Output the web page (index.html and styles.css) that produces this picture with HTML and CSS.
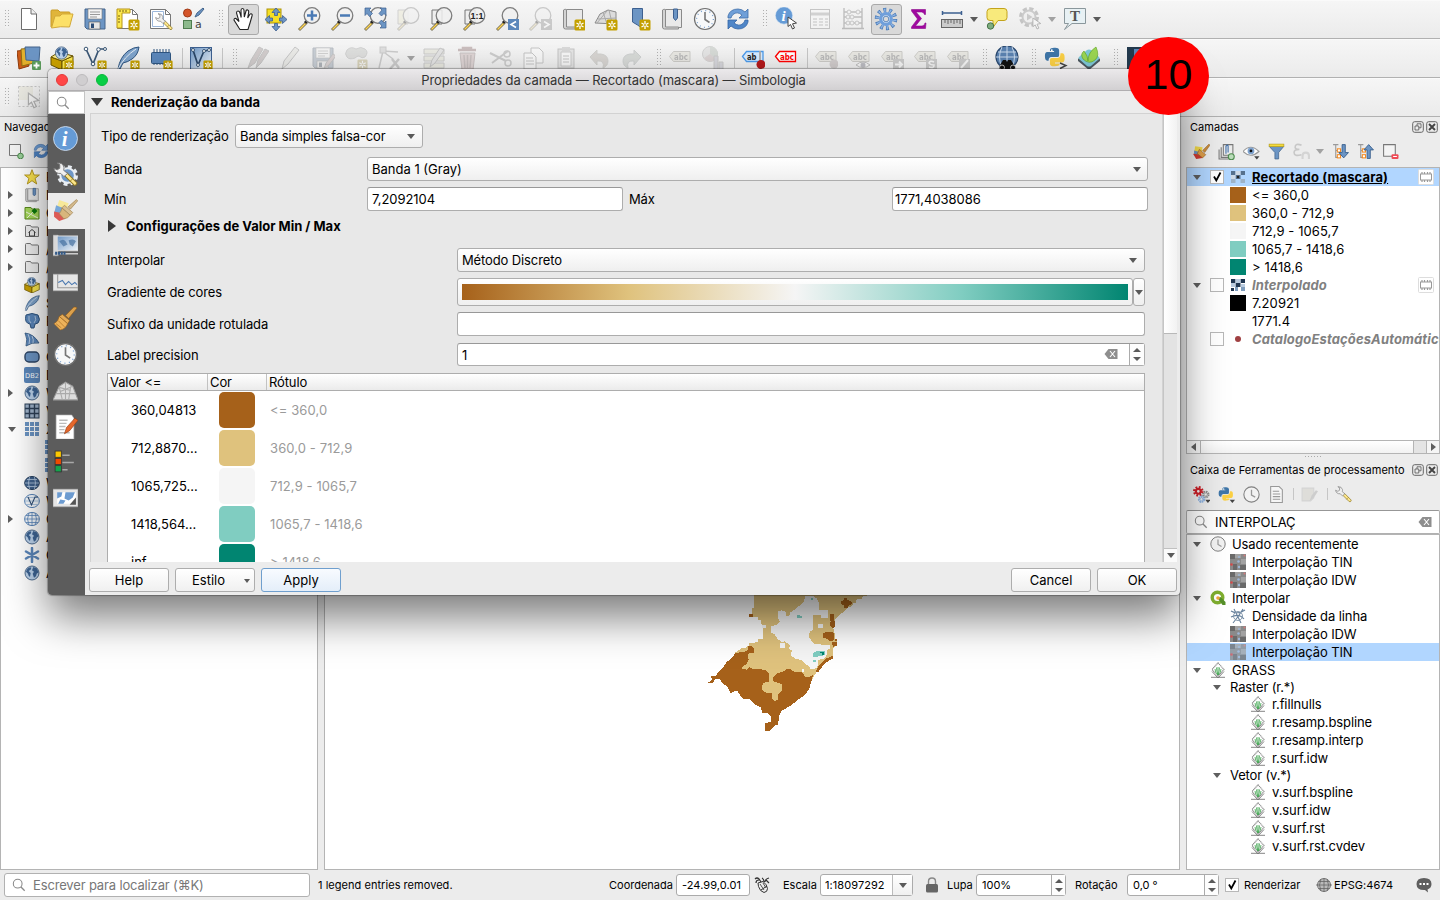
FILE: index.html
```html
<!DOCTYPE html>
<html lang="pt">
<head>
<meta charset="utf-8">
<title>QGIS</title>
<link rel="stylesheet" href="styles.css">
</head>
<body>
<svg class="defs" xmlns="http://www.w3.org/2000/svg">
<defs>
<linearGradient id="blu" x1="0" y1="0" x2="1" y2="1"><stop offset="0" stop-color="#8fb4dc"/><stop offset="1" stop-color="#3465a4"/></linearGradient>
<linearGradient id="pale" x1="0" y1="0" x2="1" y2="1"><stop offset="0" stop-color="#6b95c4"/><stop offset="1" stop-color="#f2f6fa"/></linearGradient>
<symbol id="star" viewBox="0 0 12 12"><rect x=".5" y=".5" width="11" height="11" rx="1.500" fill="#c4a000"/><path d="M6 2v8M2.500 4l7 4M2.500 8l7-4" stroke="#fff" stroke-width="1.300"/><circle cx="6" cy="6" r="1" fill="#c4a000"/></symbol>
<symbol id="new" viewBox="0 0 24 24"><path d="M4.500 1.500H14l5.500 5.500V22.500H4.500z" fill="#fff" stroke="#6d6d6d"/><path d="M14 1.500V7h5.500" fill="#eee" stroke="#6d6d6d"/></symbol>
<symbol id="open" viewBox="0 0 24 24"><path d="M1 20V4q0-1 1-1h6l2 2h9q1 0 1 1v3" fill="#e0b53a" stroke="#c99b25"/><path d="M1.500 21 5 9h5l2-2h11l-3.500 13q-9-1-18 1z" fill="#fce068" stroke="#d3a938"/></symbol>
<symbol id="save" viewBox="0 0 24 24"><path d="M2 2h20v20H4l-2-2z" fill="#6c95c4" stroke="#44658c"/><rect x="5" y="2" width="14" height="10" fill="#f4f4f4" stroke="#777" stroke-width=".6"/><path d="M7 5h10M7 7.500h10M7 10h7" stroke="#999"/><rect x="6" y="15" width="11" height="7" fill="#e6e6e6" stroke="#555" stroke-width=".6"/><rect x="8" y="16.500" width="3" height="4.500" fill="#2d4d77"/></symbol>
<symbol id="layout" viewBox="0 0 24 24"><path d="M1.500 2.500h15l5 5v14h-20z" fill="#fff" stroke="#777"/><path d="M16.500 2.500v5h5" fill="none" stroke="#777"/><path d="M1 2h13v4H6v15H1z" fill="#fce94f" stroke="#b89518"/><path d="M4 3v2M7 3v2M10 3v2M2 9h2M2 12h2M2 15h2" stroke="#755f13"/><use href="#star" x="12" y="12" width="12" height="12"/></symbol>
<symbol id="wrench" viewBox="0 0 24 24"><path d="M13 13 20 21q2 1 2.500-1L15 11z" fill="#fce68a" stroke="#a78a25"/><path d="m14 13-5-2q-3 0-4-2.500l3 .500 1.500-2L8 4.500q4 0 4 3.500l3.500 3.500z" fill="#e5e5e5" stroke="#666"/></symbol>
<symbol id="wrench2" viewBox="0 0 24 24"><path d="m11 13 9 9q2.500 1 3-2l-9.500-9.500z" fill="#fce68a" stroke="#8f7722"/><path d="m16 19 3-3" stroke="#8f7722" stroke-width=".8"/><path d="m10.500 14-3-3Q2 11.500.8 6L4 7.500 6.500 6 6.500 2.500 4 1q5.500-.500 6.500 4 .2 2-.3 3l3.800 3z" fill="#f0f0f0" stroke="#777" stroke-width=".9"/></symbol>
<symbol id="manage" viewBox="0 0 24 24"><path d="M1.500 2.500h15l5 5v14h-20z" fill="#fff" stroke="#777"/><path d="M3.500 4.500h11v15h-11z" fill="#fff" stroke="#9cb7da"/><path d="M16.500 2.500v5h5" fill="none" stroke="#777"/><use href="#wrench2" x="6" y="6" width="18" height="18"/></symbol>
<symbol id="style" viewBox="0 0 24 24"><circle cx="5.500" cy="6" r="4" fill="#d4552a" stroke="#a03b18"/><rect x="1.500" y="13.500" width="8" height="8" fill="#8cb98c" stroke="#4f7d4f"/><path d="m13 10 2-4 6-5 1 1-5 6z" fill="#6c95c4" stroke="#44658c"/><text x="13" y="21" font-size="11" font-family="DejaVu Sans" font-weight="400" fill="#444">a</text></symbol>
<symbol id="hand" viewBox="0 0 24 24"><path d="M8 21 3 13q0-2 2-1.500l3 3L5.500 6q0-2 1.500-2t2 2l1.200 4.500L10 3.500q0-2 1.500-2T13 3.500l.3 6.500L15 4q.5-1.500 1.700-1t1 2L16.700 11l2-3.500q1-1.200 2-.5t.3 2L19 16l-2 6.500H9z" fill="#fff" stroke="#222" stroke-width="1.100"/></symbol>
<symbol id="pansel" viewBox="0 0 24 24"><rect x="3" y="2" width="14" height="14" fill="#f5df23" stroke="#ad9407"/><path d="M12 1l4 4.500h-2.500v3h-3v-3H8zM12 24l4-4.500h-2.500v-3h-3v3H8zM1 12.500l4.500-4V11h3v3h-3v2.500zM23 12.500l-4.500-4V11h-3v3h3v2.500z" fill="#6c95c4" stroke="#3d6090" stroke-width=".8"/></symbol>
<symbol id="lens" viewBox="0 0 24 24"><path d="m1.500 22 7-7 1.500 1.500-7 7z" fill="#fcd34f" stroke="#333" stroke-width=".7"/><path d="m8 16 2-2" stroke="#222" stroke-width="2.800"/><circle cx="15" cy="8.500" r="7.800" fill="#f0f0f0" fill-opacity=".85" stroke="#7d7d7d" stroke-width="1.300"/></symbol>
<symbol id="zin" viewBox="0 0 24 24"><use href="#lens"/><path d="M15 3.500v10M10 8.500h10" stroke="#4a7ab5" stroke-width="2.500"/></symbol>
<symbol id="zout" viewBox="0 0 24 24"><use href="#lens"/><path d="M10 8.500h10" stroke="#4a7ab5" stroke-width="2.500"/></symbol>
<symbol id="zfull" viewBox="0 0 24 24"><use href="#lens"/><path d="M2 1h6L6 3l3.500 3.500-3 3L4 6.500 2 8.500zM23 1h-6l2 2-3 3.500 2.500 2.500L21 6.500l2 2zM23 21h-6l2-2-3-3.500 2.500-2.500 2.500 3 2-2z" fill="#6c95c4" stroke="#3d6090" stroke-width=".7"/></symbol>
<symbol id="zsel" viewBox="0 0 24 24"><path d="M2 3h10v14H2z" fill="#f0e8a0" stroke="#999"/><use href="#lens"/></symbol>
<symbol id="zlay" viewBox="0 0 24 24"><path d="M3 3h10v14H3z" fill="#eee" stroke="#777"/><use href="#lens"/></symbol>
<symbol id="z11" viewBox="0 0 24 24"><use href="#zlay"/><text x="8.500" y="12" font-size="9" font-weight="700" font-family="Liberation Sans" fill="#222">1:1</text></symbol>
<symbol id="zprev" viewBox="0 0 24 24"><use href="#lens"/><rect x="13" y="12" width="11" height="11" fill="#5b87bb"/><path d="m21 14.500-5 3 5 3" fill="none" stroke="#fff" stroke-width="1.600"/></symbol>
<symbol id="znext" viewBox="0 0 24 24"><use href="#lens"/><rect x="13" y="12" width="11" height="11" fill="#888"/><path d="m16 14.500 5 3-5 3" fill="none" stroke="#fff" stroke-width="1.600"/></symbol>
<symbol id="book" viewBox="0 0 24 24"><path d="M5.500 2.500h16v18h-16z" fill="#e9e9e9" stroke="#8a8a8a"/><path d="M2.500 3q3-2 3 1v16h13v2h-14q-2 0-2-2z" fill="#d3d3d3" stroke="#8a8a8a"/></symbol>
<symbol id="newmap" viewBox="0 0 24 24"><use href="#book"/><use href="#star" x="13" y="12" width="12" height="12"/></symbol>
<symbol id="new3d" viewBox="0 0 24 24"><path d="M1 16 6 7l8-4 8 2v12z" fill="#dcdcdc" stroke="#8a8a8a"/><path d="m4 12 18-1M9 5l4 12M15 3l3 13M3 16 13 4" stroke="#aaa" fill="none"/><use href="#star" x="12" y="12" width="12" height="12"/></symbol>
<symbol id="newbm" viewBox="0 0 24 24"><path d="M5.500 1.500h10v20l-5-3.500-5-3z" fill="#6c95c4" stroke="#3d6090"/><use href="#star" x="12" y="12" width="12" height="12"/></symbol>
<symbol id="bm" viewBox="0 0 24 24"><use href="#book"/><path d="M13.500 2v9l2 2.500 2-2.500V2z" fill="#6c95c4" stroke="#3d6090"/></symbol>
<symbol id="clock" viewBox="0 0 24 24"><circle cx="12" cy="12" r="10.500" fill="#f7f8f9" stroke="#707070" stroke-width="1.200"/><circle cx="12" cy="12" r="8.400" fill="none" stroke="#7aa0cf" stroke-width="1.300" stroke-dasharray="1 3.400"/><path d="M12 5v7.500l4.500 3" fill="none" stroke="#777" stroke-width="1.600"/></symbol>
<symbol id="refresh" viewBox="0 0 24 24"><path d="M2 11V9q2-7 10-7 4 0 7 3l3-3v9h-9l3-3q-5-4-9-.500-1.500 1.500-2 3.500z" fill="#6f9fd8" stroke="#3d6da8" stroke-width=".8"/><path d="M22 13v2q-2 7-10 7-4 0-7-3l-3 3v-9h9l-3 3q5 4 9 .500 1.500-1.500 2-3.500z" fill="#4f86c8" stroke="#3465a4" stroke-width=".8"/></symbol>
<symbol id="info" viewBox="0 0 24 24"><circle cx="12" cy="12" r="11.500" fill="#659bd6" stroke="#d8e5f4" stroke-width=".8"/><text x="8.500" y="19" font-family="Liberation Serif" font-style="italic" font-weight="700" font-size="20" fill="#fff">i</text></symbol>
<symbol id="cursor" viewBox="0 0 12 14"><path d="M1 1v9.500l2.500-2 2 4.500 2-1-2-4.200L9.500 7z" fill="#fff" stroke="#444"/></symbol>
<symbol id="identify" viewBox="0 0 24 24"><use href="#info" x="0" y="-1" width="18" height="19"/><use href="#cursor" x="12" y="9" width="12" height="14"/></symbol>
<symbol id="table" viewBox="0 0 24 24"><rect x="2.500" y="2.500" width="19" height="19" fill="#fafafa" stroke="#777"/><path d="M3 7h18" stroke="#999" stroke-width="3"/><path d="M5 12h4M11 12h4M17 12h3M5 15h4M11 15h4M17 15h3M5 18h4M11 18h4M17 18h3" stroke="#777"/></symbol>
<symbol id="abacus" viewBox="0 0 24 24"><path d="M3 1v20M21 1v20M1 21.500h22M3 5h18M3 10h18M3 16h18" stroke="#666" stroke-width="1.400"/><g fill="#eee" stroke="#777"><circle cx="8" cy="5" r="2"/><circle cx="17" cy="5" r="2"/><circle cx="7" cy="10" r="2"/><circle cx="11" cy="10" r="2"/><circle cx="7" cy="16" r="2"/><circle cx="11" cy="16" r="2"/><circle cx="16" cy="16" r="2"/></g></symbol>
<symbol id="gear" viewBox="0 0 24 24"><circle cx="12" cy="12" r="9" fill="none" stroke="#4376b5" stroke-width="4.500" stroke-dasharray="2.800 2.855"/><circle cx="12" cy="12" r="8.300" fill="none" stroke="#8db4e4" stroke-width="4.600" stroke-dasharray="1.400 3.815" stroke-dashoffset="-.55"/><circle cx="12" cy="12" r="5.300" fill="#dce8f5" stroke="#6f9fdb" stroke-width="3.200"/><circle cx="12" cy="12" r="2.800" fill="#dadada" stroke="#4376b5" stroke-width=".8"/></symbol>
<symbol id="sigma" viewBox="0 0 24 24"><path d="M4.500 2.500h14v5h-1q-.5-2.500-3-2.500H9l5.500 6.500L8.500 19H15q2.500 0 3-3h1l-.5 5.500h-14V20l6-8-6-8z" fill="#a008a0" stroke="#8b0a8b" stroke-width=".6"/></symbol>
<symbol id="ruler" viewBox="0 0 24 24"><path d="M2 6h20M2.500 4v4M21.500 4v4" stroke="#3d6090" stroke-width="1.500"/><rect x="1.500" y="12.500" width="21" height="8" fill="#ccc" stroke="#666"/><path d="M5 13v3M8 13v4M11 13v3M14 13v4M17 13v3M20 13v4" stroke="#666"/></symbol>
<symbol id="tip" viewBox="0 0 24 24"><path d="M6 1.500h13q3 0 3 3v6q0 3-3 3h-6l-5 7v-7H5q-3 0-3-3v-6q0-3 4-3z" fill="#f8ea7c" stroke="#c3a31b"/><circle cx="5.500" cy="19" r="3.200" fill="#7fad7f" stroke="#46734a"/></symbol>
<symbol id="action" viewBox="0 0 24 24"><circle cx="11" cy="10" r="8" fill="none" stroke="#777" stroke-width="4" stroke-dasharray="4 2.280"/><circle cx="11" cy="10" r="6.500" fill="#eee" stroke="#888" stroke-width="2"/><path d="M9 6.500v7l5.500-3.500z" fill="#888"/><use href="#cursor" x="14" y="10" width="11" height="13"/></symbol>
<symbol id="textann" viewBox="0 0 24 24"><path d="M1.500 1.500h21v15H9l-7.500 6 4-6h-4z" fill="#e8f1f4" stroke="#8a979c"/><text x="7" y="14" font-size="15" font-weight="700" font-family="Liberation Serif" fill="#555">T</text></symbol>
<symbol id="dsm" viewBox="0 0 24 24"><path d="m0 5 9-1 3 16-10 3z" fill="#cc5c18" stroke="#8f3b0c"/><path d="m4 3 12-1 1 15-12 3z" fill="#e3b12d" stroke="#8f6c12"/><path d="M8 1h15l-1 14-13-1z" fill="#6c95c4" stroke="#44658c"/><rect x="15" y="15" width="9" height="9" rx="1" fill="#5b9b5b"/><path d="M19.500 16.500v6M16.500 19.500h6" stroke="#fff" stroke-width="1.800"/></symbol>
<symbol id="globe" viewBox="0 0 24 24"><circle cx="12" cy="12" r="10.500" fill="#bcd3ec" stroke="#2f4f76" stroke-width="1.200"/><path d="M4 7q4-5 7-3l-1 3-3 2 3 3-1 6q-3-2-3-5L3 10zM14 3l5 2 3 6-3 2-1 4-3 2-2-6 2-3-3-2z" fill="#3e6595"/></symbol>
<symbol id="gpkg" viewBox="0 0 24 24"><path d="m1 11 11 4v9L1 19z" fill="#c9a000" stroke="#6b5500"/><path d="m12 15 11-5v9l-11 5z" fill="#fce94f" stroke="#6b5500"/><path d="m1 11 8-5 14 4-11 5z" fill="#f8e98c" stroke="#6b5500"/><use href="#globe" x="4" y="0" width="15" height="14"/></symbol>
<symbol id="ngpkg" viewBox="0 0 24 24"><use href="#gpkg"/><use href="#star" x="14" y="14" width="10" height="10"/></symbol>
<symbol id="nshp" viewBox="0 0 24 24"><path d="m3 3 7 15L16 3l6 0" fill="none" stroke="#3b5775" stroke-width="1.700"/><g fill="#fff" stroke="#3b5775"><circle cx="3" cy="3" r="1.800"/><circle cx="10" cy="18" r="1.800"/><circle cx="15.500" cy="3.500" r="1.800"/><circle cx="22" cy="3" r="1.500"/></g><use href="#star" x="14" y="14" width="10" height="10"/></symbol>
<symbol id="feather" viewBox="0 0 24 24"><path d="M2 23Q4 11 12 5q6-4 11-4-1 8-7 12-4 3-9 4l-3 6z" fill="#7ea3cb" stroke="#2f5580"/><path d="M2 23Q8 11 20 3" fill="none" stroke="#fff" stroke-width=".8"/></symbol>
<symbol id="nspl" viewBox="0 0 24 24"><use href="#feather"/><use href="#star" x="14" y="14" width="10" height="10"/></symbol>
<symbol id="nmem" viewBox="0 0 24 24"><path d="M5 3v16M8 3v16M11 3v16M14 3v16M17 3v16M20 3v16" stroke="#2f5580"/><rect x="2.500" y="6.500" width="19" height="11" rx="1" fill="#5b87bb" stroke="#2f5580"/><use href="#star" x="14" y="14" width="10" height="10"/></symbol>
<symbol id="nvirt" viewBox="0 0 24 24"><rect x="1.500" y="1.500" width="21" height="22" fill="url(#pale)" stroke="#3d6090"/><path d="m4 4 5 15L15 5l6-1" fill="none" stroke="#2b4666" stroke-width="1.700"/><g fill="#fff" stroke="#3b5775"><circle cx="4" cy="4" r="1.500"/><circle cx="9" cy="19" r="1.500"/><circle cx="15" cy="5" r="1.500"/><circle cx="20" cy="4" r="1.500"/></g><use href="#star" x="14" y="14" width="10" height="10"/></symbol>
<symbol id="pencils" viewBox="0 0 24 24"><path d="m3 22 3-8L14 1l4 2-8 14zM11 22l2-8 7-11 4 2-8 12z" fill="#a88" stroke="#777"/></symbol>
<symbol id="pencil" viewBox="0 0 24 24"><path d="m4 23 2-8L17 1l4 3L10 18z" fill="#ddc" stroke="#777"/></symbol>
<symbol id="saveed" viewBox="0 0 24 24"><use href="#save"/><path d="m13 23 2-6 7-9 3 2-7 9z" fill="#c99" stroke="#777"/></symbol>
<symbol id="blob" viewBox="0 0 24 24"><path d="M3 4q4-4 9-1 5-3 9 0t0 8q-3 2-6-1-2 0-4 2-6 2-8-1-3-3 0-7z" fill="#b8bdb5" stroke="#999"/><use href="#star" x="13" y="13" width="11" height="11"/></symbol>
<symbol id="vertex" viewBox="0 0 24 24"><path d="M2 22 6 5l15 1M8 7l8 6" fill="none" stroke="#888" stroke-width="1.500"/><rect x="3" y="1" width="6" height="6" fill="#bbb" stroke="#888"/><path d="m15 13 7 9M22 13l-9 10" stroke="#888" stroke-width="2.500"/></symbol>
<symbol id="medit" viewBox="0 0 24 24"><path d="M2 3h20v5H2zM2 10h20v5H2zM2 17h20v5H2z" fill="#dda" stroke="#888"/><path d="m8 21 2-7 8-12 4 2-9 13z" fill="#ccc" stroke="#777"/></symbol>
<symbol id="trash" viewBox="0 0 24 24"><path d="M3 4h18M8 2h8v2H8z" stroke="#a55" stroke-width="2.500"/><path d="M5 7h15l-2 17H7z" fill="#d99" stroke="#966"/><path d="M9 9l1 13M12.500 9v13M16 9l-1 13" stroke="#966" stroke-width="1.500"/></symbol>
<symbol id="cut" viewBox="0 0 24 24"><path d="M2 7 18 15M4 17 20 5" stroke="#888" stroke-width="2"/><circle cx="19" cy="8" r="3" fill="none" stroke="#888" stroke-width="1.500"/><circle cx="20" cy="17" r="3" fill="none" stroke="#888" stroke-width="1.500"/></symbol>
<symbol id="copy" viewBox="0 0 24 24"><path d="M10 2h8l4 4v11H10z" fill="#fff" stroke="#777"/><path d="M3 7h8l4 4v12H3z" fill="#fff" stroke="#777"/><path d="M5 12h7M5 15h8M5 18h8" stroke="#777"/></symbol>
<symbol id="paste" viewBox="0 0 24 24"><rect x="4" y="3" width="16" height="19" fill="#ccc" stroke="#777"/><path d="M7 6h10v14H7z" fill="#fff" stroke="#888"/><path d="M8 1h8v4H8z" fill="#aaa"/><path d="M9 10h6M9 13h6M9 16h6" stroke="#777"/></symbol>
<symbol id="undo" viewBox="0 0 24 24"><path d="M3 11l7-7v4h4q7 1 7 7 0 5-5 7 2-8-6-7v4z" fill="#b6a08c" stroke="#998"/></symbol>
<symbol id="redo" viewBox="0 0 24 24"><path d="M21 11l-7-7v4h-4q-7 1-7 7 0 5 5 7-2-8 6-7v4z" fill="#a5b5a5" stroke="#899"/></symbol>
<symbol id="tag" viewBox="0 0 24 24"><path d="M1.500 10.500 5.500 5.500h16.500v10H5.500z" fill="#dcd7b4" stroke="#8e8a70"/><text x="6" y="13.500" font-size="8" font-weight="700" font-family="DejaVu Sans" fill="#555" textLength="14" lengthAdjust="spacingAndGlyphs">abc</text></symbol>
<symbol id="pie" viewBox="0 0 24 24"><circle cx="9" cy="8" r="7.500" fill="#ccc" stroke="#999"/><path d="M9 8V.5A7.500 7.500 0 0 1 15 13z" fill="#9ab59a"/><path d="M9 8 15 13A7.500 7.500 0 0 1 3 12z" fill="#c99"/><path d="M13 24V10h4v14zM18 24v-8h4v8z" fill="#aac" stroke="#888"/></symbol>
<symbol id="pin" viewBox="0 0 24 24"><path d="M1.500 10.500 5.500 5.500h16.500v10H5.500z" fill="#d9ecff" stroke="#4d9bea" stroke-width="1.300"/><text x="6" y="13.500" font-size="8" font-weight="700" font-family="DejaVu Sans" fill="#222" textLength="9.500" lengthAdjust="spacingAndGlyphs">ab</text><path d="M19 5v10" stroke="#aaa" stroke-width="1.800"/><circle cx="20" cy="18.500" r="4.500" fill="#b4191b"/></symbol>
<symbol id="rtag" viewBox="0 0 24 24"><path d="M1.500 10.500 5.500 5.500h16v10h-16z" fill="#fff" stroke="#f00" stroke-width="1.300"/><text x="6" y="13.500" font-size="8" font-weight="700" font-family="DejaVu Sans" fill="#f00" textLength="14" lengthAdjust="spacingAndGlyphs">abc</text></symbol>
<symbol id="tagp" viewBox="0 0 24 24"><use href="#tag"/><circle cx="20" cy="18" r="4.500" fill="#a88"/></symbol>
<symbol id="tage" viewBox="0 0 24 24"><use href="#tag"/><path d="M9 19q7-6 14 0-7 5-14 0z" fill="#fff" stroke="#666"/><circle cx="16" cy="19" r="2.500" fill="#668"/></symbol>
<symbol id="tagm" viewBox="0 0 24 24"><use href="#tag"/><rect x="13" y="13" width="11" height="11" fill="#888"/><path d="M15 18.500h7M19 15.500l3 3-3 3" fill="none" stroke="#fff" stroke-width="2"/></symbol>
<symbol id="tagr" viewBox="0 0 24 24"><use href="#tag"/><rect x="13" y="13" width="11" height="11" fill="#888"/><path d="M21 16q-4-2-5 1 1 2 5 2 0 4-5 2" fill="none" stroke="#fff" stroke-width="1.600"/></symbol>
<symbol id="taged" viewBox="0 0 24 24"><use href="#tag"/><rect x="13" y="13" width="11" height="11" fill="#888"/><path d="m15 22 7-8" stroke="#fff" stroke-width="2"/></symbol>
<symbol id="metas" viewBox="0 0 24 24"><circle cx="12" cy="11" r="11" fill="#5a82b1" stroke="#2c4a70" stroke-width="1.200"/><path d="M1 11h22M3 6h18M12 0v22M7 1q-5 10 0 20M17 1q5 10 0 20" stroke="#c8d9ec" fill="none"/><path d="M4 24v-3l4-7h3l1 2 1-2h3l4 7v3z" fill="#111"/><circle cx="7" cy="21.500" r="2.500" fill="#111" stroke="#fff" stroke-width=".7"/><circle cx="18" cy="21.500" r="2.500" fill="#111" stroke="#fff" stroke-width=".7"/></symbol>
<symbol id="python" viewBox="0 0 24 24"><path d="M11 2q5-.500 5.500 2.500V10q0 2-2 2H8q-3 0-3 4H3.500Q1 16 1 11t3-4.500h7V5.500H6.500V4Q7 2 11 2z" fill="#3f76a8"/><path d="M12 22q-5 .500-5.500-2.500V15q0-2 2-2H15q3 0 3-5h2q2.500 0 2.500 5t-3 5H12v1h5v1.500q-.5 1.500-5 1.500z" fill="#fbd044"/><circle cx="8.500" cy="4.500" r="1" fill="#fff"/></symbol>
<symbol id="pycon" viewBox="0 0 24 24"><use href="#python" x="0" y="0" width="22" height="22"/><path d="m16 17 6 2.500-6 3" fill="none" stroke="#444" stroke-width="1.400"/></symbol>
<symbol id="qfield" viewBox="0 0 24 24"><path d="m1 13 11-9 11 9v2l-11 9-11-9z" fill="#4d5960"/><path d="M2 11 10 4q2-1 4 0l8 7q1 1 0 2l-8 7q-2 1-4 0l-8-7q-1-1 0-2z" fill="#7ec8d8"/><path d="M6 13q-3-5 1-8 4 5 4 10Q11 6 19 1q4 9-1 13-6 5-12-1z" fill="#9bd653" stroke="#5ea31f" stroke-width=".6"/></symbol>
<symbol id="bars" viewBox="0 0 24 24"><rect x="1" y="1" width="22" height="22" fill="#233a4e"/><path d="M8 3h6v20H8z" fill="#5b87bb"/></symbol>
<symbol id="selrect" viewBox="0 0 24 24"><rect x="2" y="1" width="14" height="14" fill="#e2dca8"/><path d="M1.500 1.500h21v20h-21z" fill="none" stroke="#777" stroke-dasharray="2 2"/><use href="#cursor" x="10" y="7" width="15" height="17"/></symbol>
<symbol id="brush" viewBox="0 0 24 24"><path d="m22 1 1 1-8 10-3-3 8-8z" fill="#dba04c" stroke="#8a5716" stroke-width=".6"/><path d="m9 8 7 6-2 3-8-7z" fill="#e4ab58" stroke="#8a5716" stroke-width=".6"/><path d="m6 10 8 7q-2 5-7 6l-6-6q4-2 5-7z" fill="#edb25a" stroke="#a5691c" stroke-width=".6"/><path d="m3 17 5 4M5 14l6 6" stroke="#ae7328" stroke-width=".7"/></symbol>
<symbol id="symb" viewBox="0 0 24 24"><path d="m6 2 9 3-3 9-9-3z" fill="#f7e99a"/><path d="m3 7 10 4-3 7-9-3z" fill="#78a7d7"/><path d="m1 13 10 2 1 5-6 2-5-4z" fill="#dc5a55"/><path d="m22.500 1.500 1.200 1.200-7 8-2.200-2.200z" fill="#d3b98c" stroke="#9b7d48" stroke-width=".6"/><path d="m11 7 8 7-2.500 2.500-8-7z" fill="#d9c094" stroke="#9b7d48" stroke-width=".6"/><path d="m8.500 9.500 8 7q-2 3-6 3.500l-4.500-5q2-2 2.500-5.500z" fill="#d8b67c" stroke="#a0834f" stroke-width=".6"/></symbol>
<symbol id="sbrush" viewBox="0 0 16 16"><path d="m2 3 7 1-1 6-7-1z" fill="#f1d94b"/><path d="m1 7 7 2-2 3-5-1z" fill="#6c95c4"/><path d="m0 10 8 1 1 3-6 1z" fill="#cf3a30"/><path d="m15 1 1 1-5 7-2-2z" fill="#c98b3c" stroke="#8a5716" stroke-width=".4"/><path d="m6 6 6 5-3 3-5-4z" fill="#dd9d49" stroke="#8a5716" stroke-width=".5"/></symbol>
<symbol id="sgear" viewBox="0 0 24 24"><circle cx="14" cy="13" r="8" fill="none" stroke="#e9eef3" stroke-width="4" stroke-dasharray="3.500 2.780"/><circle cx="14" cy="13" r="7" fill="#6f97c6" stroke="#e9eef3" stroke-width="2"/><use href="#wrench2"/></symbol>
<symbol id="transp" viewBox="0 0 24 24"><path d="M0 1h5v20H0z" fill="#d8d8d8" stroke="#888" stroke-width=".6"/><path d="M4 2h20v14H4z" fill="url(#pale)" stroke="#ddd"/><path d="M6 7q4-3 6 0l2 3-4 2zM15 6q5-2 7 1l-3 5-3-2z" fill="#46709f" opacity=".7"/><path d="M0 19h24" stroke="#ccc" stroke-width="1.500"/><path d="M2 18.500h10" stroke="#335a88" stroke-width="3" stroke-dasharray="2 .7"/></symbol>
<symbol id="histo" viewBox="0 0 24 24"><path d="M0 4h24v16H0z" fill="#e6e6e6" stroke="#999" stroke-width=".6"/><path d="M4.500 4v13H24" fill="none" stroke="#999"/><path d="m5 12 4-2 3 4 3-3 3 3 3-2 2 2" fill="none" stroke="#4a78b0"/></symbol>
<symbol id="pyr" viewBox="0 0 24 24"><path d="m0 21 6-13 6-4 7 4 5 13z" fill="#ddd" stroke="#999"/><path d="m3 15 18 0M6 9l3 12M12 4v17M17 8l-2 13M6 9l11 3M19 8l-12 5" stroke="#aaa" fill="none"/></symbol>
<symbol id="meta" viewBox="0 0 24 24"><path d="M3 1h15l2 3v20H3z" fill="#fff" stroke="#bbb" stroke-width=".6"/><path d="M6 6h8M6 9h7M6 12h6M6 15h5M6 18h10" stroke="#bbb" stroke-width="1.300"/><path d="m11 19 2-6 8-9 3 2-8 10z" fill="#e5672b" stroke="#943a10" stroke-width=".6"/></symbol>
<symbol id="legend" viewBox="0 0 24 24"><g stroke="#333" stroke-width=".8"><rect x="2" y="1" width="6" height="6" fill="#fcc800"/><rect x="2" y="8" width="6" height="6" fill="#f04a00"/><rect x="2" y="15" width="6" height="6" fill="#14a44d"/></g><path d="M9 5h7M9 12h11M9 19h5" stroke="#a8a8a8" stroke-width="1.500"/></symbol>
<symbol id="serv" viewBox="0 0 24 24"><path d="M0 3h24v17H0z" fill="#e6e6e6" stroke="#999" stroke-width=".6"/><path d="M4 6h18v11H4z" fill="#fff"/><path d="M4 6h5l-1 4-4 2zM12 6h9l-2 5-4 3-4-2zM7 13l5 1-2 3H5z" fill="#6c9bd0"/><path d="m16 18 6-7v7z" fill="#555"/></symbol>
<symbol id="fav" viewBox="0 0 16 16"><path d="m8 .7 2 5.300h5.400l-4.300 3.400 1.600 5.600L8 11.700 3.300 15l1.600-5.600L.6 6H6z" fill="#fbe34f" stroke="#b39416" stroke-width=".9"/></symbol>
<symbol id="folder" viewBox="0 0 16 16"><path d="M1.500 3.500q0-1 1-1h4l1 1.500h6q1 0 1 1v8.500h-13z" fill="#f0f0f0" stroke="#777"/></symbol>
<symbol id="home" viewBox="0 0 16 16"><use href="#folder"/><path d="m4.500 9.500 3.500-3 3.500 3M5.500 9v4h5V9" fill="none" stroke="#444"/></symbol>
<symbol id="proj" viewBox="0 0 16 16"><path d="M1 2.500h6l1 1.500h7v10H1z" fill="#a7da5c" stroke="#5b8a1e"/><path d="m2 7 12 6M3 13l8-8" stroke="#eff8df"/><path d="m10.500 3 3 3-3 3-3-3z" fill="#0c7a0c"/></symbol>
<symbol id="eleph" viewBox="0 0 16 16"><path d="M2 2q6-3 12 0 3 5 0 8l-3 1-1 4H7l-1-4q-6-1-4-9z" fill="#5b87bb" stroke="#2f5580"/><path d="M5 3q-1 5 2 7M11 3q2 4-1 7" fill="none" stroke="#d3e1f1" stroke-width=".7"/></symbol>
<symbol id="mssql" viewBox="0 0 16 16"><path d="M1 2q9 1 14 10-7-1-13 3 2-7-1-13z" fill="#5b87bb" stroke="#2f5580" stroke-width=".8"/><path d="M4 3q3 5 1 10M8 5q2 4 1 7" fill="none" stroke="#d3e1f1" stroke-width=".8"/></symbol>
<symbol id="ora" viewBox="0 0 16 16"><rect x="1" y="3" width="14" height="10" rx="4" fill="#6c95c4" stroke="#2d4566" stroke-width="1.400"/></symbol>
<symbol id="db2" viewBox="0 0 16 16"><rect width="16" height="16" rx="2" fill="#5b87bb"/><text x="1" y="10.500" font-size="6.500" font-family="DejaVu Sans" fill="#fff" textLength="14" lengthAdjust="spacingAndGlyphs">DB2</text></symbol>
<symbol id="grid" viewBox="0 0 16 16"><rect x="1" y="1" width="14" height="14" fill="#9fb3cb" stroke="#2d4058"/><path d="M1 5.500h14M1 10.500h14M5.500 1v14M10.500 1v14" stroke="#2d4058" stroke-width="1.400"/></symbol>
<symbol id="tiles" viewBox="0 0 16 16"><path d="M1 3h14M1 8h14M1 13h14" stroke="#6c95c4" stroke-width="3.800" stroke-dasharray="4 1"/></symbol>
<symbol id="wire" viewBox="0 0 16 16"><ellipse cx="8" cy="8" rx="7.400" ry="6.600" fill="#f4f8fc" stroke="#5b87bb"/><path d="M1 8h14M2 4.500h12M2 11.500h12M8 1.500v13M5 2q-3 6 0 12M11 2q3 6 0 12" fill="none" stroke="#5b87bb" stroke-width=".8"/></symbol>
<symbol id="wfs" viewBox="0 0 16 16"><ellipse cx="8" cy="8" rx="7.400" ry="6.600" fill="#f4f8fc" stroke="#5b87bb"/><path d="M1 8h14M2 4.500h12M2 11.500h12" stroke="#9dbbdc" stroke-width=".8"/><path d="m4 4 3.500 8L11 4h3" fill="none" stroke="#2f4f76" stroke-width="1.100"/></symbol>
<symbol id="wcs" viewBox="0 0 16 16"><ellipse cx="8" cy="8" rx="7.300" ry="6.500" fill="#40628d" stroke="#223c5c"/><path d="M1 8h14M3 4.500h10M3 11.500h10M5.500 2q-2 6 0 12M10.500 2q2 6 0 12" fill="none" stroke="#b9cde3" stroke-width=".8"/></symbol>
<symbol id="flake" viewBox="0 0 16 16"><path d="M8 1v14M2 4.500l12 7M2 11.500l12-7" stroke="#5b87bb" stroke-width="2.500" stroke-linecap="round"/></symbol>
<symbol id="add" viewBox="0 0 16 16"><path d="M1.500 1.500h11v11h-11z" fill="#f4f4f4" stroke="#777"/><circle cx="12.500" cy="13" r="2.800" fill="#9c9" stroke="#4b8a4b"/></symbol>
<symbol id="rem" viewBox="0 0 16 16"><path d="M1.500 1.500h11v11h-11z" fill="#f4f4f4" stroke="#777"/><rect x="9" y="10.500" width="6.500" height="4.500" rx="1" fill="#ef4a55"/><path d="M10.500 12.700h3.500" stroke="#fff"/></symbol>
<symbol id="addgrp" viewBox="0 0 16 16"><path d="M5 1.500h9v10H5zM3 4v9.500h9M1 6v9h9" fill="none" stroke="#777"/><path d="M7.500 10V3q2-2 2 0v6" fill="none" stroke="#3d6da8"/><circle cx="12.500" cy="13" r="2.800" fill="#bdb" stroke="#4b8a4b"/></symbol>
<symbol id="eye" viewBox="0 0 16 16"><path d="M0 8q7-8 15 0-8 7-15 0z" fill="#fff" stroke="#999"/><circle cx="7.500" cy="7.500" r="3.200" fill="#7fa3cf"/><circle cx="7.500" cy="7.500" r="1.300" fill="#111"/><path d="M10.500 12.500h5l-2.500 3z" fill="#444"/></symbol>
<symbol id="filter" viewBox="0 0 16 16"><path d="M1 3h14l-5 6v6H6.500V9z" fill="#6c95c4" stroke="#44658c" stroke-width=".7"/><rect x="1" y="1" width="14" height="2.500" fill="#f4dc3c" stroke="#a88d10" stroke-width=".5"/></symbol>
<symbol id="eps" viewBox="0 0 16 16"><path d="M8 2Q2 0 2 4q0 2 4 2-5 0-5 3 0 4 7 2" fill="none" stroke="#888" stroke-width="1.500"/><path d="M9 15v-3q0-3 3-3t3 3v3" fill="none" stroke="#aaa" stroke-width="2"/></symbol>
<symbol id="expand" viewBox="0 0 16 16"><path d="M1 1.500h5M3.500 2v11.500H6M3.500 7H6" stroke="#999" fill="none"/><g fill="#fff" stroke="#f58a1f"><rect x="5" y="5.500" width="3" height="3"/><rect x="5" y="11" width="3" height="3"/></g><path d="M9.500 1.500h3V9h3l-4.500 5L6.500 9h3z" fill="#6c95c4" stroke="#335a88" stroke-width=".8"/></symbol>
<symbol id="collapse" viewBox="0 0 16 16"><path d="M1 1.500h5M3.500 2v11.500H6M3.500 7H6" stroke="#999" fill="none"/><g fill="#fff" stroke="#f58a1f"><rect x="5" y="5.500" width="3" height="3"/><rect x="5" y="11" width="3" height="3"/></g><path d="M9.500 14.500h3V6.500h3L11 1.500 6.500 6.500h3z" fill="#6c95c4" stroke="#335a88" stroke-width=".8"/></symbol>
<symbol id="raster" viewBox="0 0 16 16"><path d="M1 2h4.500v4H1zM10.500 2H15v4h-4.500zM5.500 6h5v4h-5z" fill="#56718e"/><path d="M5.500 2h5v4h-5zM1 6h4.500v4H1z" fill="#cfdae6"/><path d="M10.500 10H15v4h-4.500zM1 10h4.500v4H1z" fill="#9db3c9"/><circle cx="8" cy="8" r="1.200" fill="#222"/></symbol>
<symbol id="raster2" viewBox="0 0 16 16"><path d="M1 2h4.500v4H1zM10.500 2H15v4h-4.500zM5.500 6h5v4h-5zM1 11h3v3H1z" fill="#1f3550"/><path d="M5.500 2h5v4h-5zM1 6h4.500v4H1zM11 7h4v3h-4z" fill="#b9cbdf"/><path d="M11 10h4v4h-4zM5 10h3v4H5z" fill="#7f9dbd"/></symbol>
<symbol id="chip" viewBox="0 0 16 16"><rect x=".5" y=".5" width="15" height="15" rx="1" fill="#fff" stroke="#ddd"/><path d="M4 3v10M6.500 3v10M9.500 3v10M12 3v10" stroke="#999" stroke-width="1.200"/><rect x="2.500" y="5" width="11" height="6" fill="#fff" stroke="#999"/></symbol>
<symbol id="float" viewBox="0 0 12 12"><rect x=".7" y=".7" width="10.600" height="10.600" rx="2" fill="none" stroke="#666" stroke-width="1"/><path d="M5 2.800h4v4H5z" fill="none" stroke="#555" stroke-width=".8"/><path d="M3 5h3.800v4H3z" fill="#ececec" stroke="#555" stroke-width=".8"/></symbol>
<symbol id="close" viewBox="0 0 12 12"><rect x=".7" y=".7" width="10.600" height="10.600" rx="2" fill="none" stroke="#666" stroke-width="1"/><path d="m3 3 6 6M9 3 3 9" stroke="#444" stroke-width="1.900"/></symbol>
<symbol id="gears" viewBox="0 0 16 16"><circle cx="5" cy="5" r="3.500" fill="none" stroke="#cc2028" stroke-width="3" stroke-dasharray="1.500 1.250"/><circle cx="5" cy="5" r="2.300" fill="none" stroke="#cc2028" stroke-width="2"/><circle cx="12" cy="8" r="2.300" fill="none" stroke="#8a8a8a" stroke-width="2.500" stroke-dasharray="1.200 .6"/><circle cx="8" cy="12.500" r="2.200" fill="none" stroke="#8db1de" stroke-width="2.500" stroke-dasharray="1.300 .42"/><path d="M11.500 13h5L14 16z" fill="#444"/></symbol>
<symbol id="pydd" viewBox="0 0 16 16"><use href="#python" width="15" height="15"/><path d="M11 13h5l-2.500 3z" fill="#444"/></symbol>
<symbol id="gclock" viewBox="0 0 16 16"><circle cx="8" cy="8" r="7.200" fill="#f2f2f2" stroke="#808080"/><path d="M8 3.500V8.500l3.500 2" fill="none" stroke="#999" stroke-width="1.200"/></symbol>
<symbol id="page" viewBox="0 0 16 16"><path d="M2.500.5h8l3 3v12h-11z" fill="#f6f6f6" stroke="#999"/><path d="M4.500 5h6M4.500 7.500h7M4.500 10h7M4.500 12.500h7" stroke="#999"/></symbol>
<symbol id="edit" viewBox="0 0 16 16"><path d="M1 2h11v9l-3 3H1z" fill="#c9c5aa" stroke="#aaa"/><path d="m8 14 2-5 4-5 2 1-4 6z" fill="#999"/></symbol>
<symbol id="interp" viewBox="0 0 16 16"><rect width="16" height="16" fill="#8a8a8a"/><path d="M0 0h5v5H0zM10 11h6v5h-6zM3 10h4v6H3z" fill="#6a6a6a"/><path d="M5 0h6v4H5zM11 5h5v5h-5z" fill="#a2a2a2"/><circle cx="1.500" cy="10.500" r="1.300" fill="#d24a4a"/><circle cx="14.500" cy="1.500" r="1" fill="#d27a7a"/><circle cx="8.500" cy="7.500" r="1.300" fill="#9db6d6"/><circle cx="9" cy="13" r="1.200" fill="#9db6d6"/><circle cx="9" cy="3" r="1" fill="#9db6d6"/></symbol>
<symbol id="qgis" viewBox="0 0 16 16"><circle cx="7.500" cy="7.500" r="5.300" fill="#fff" stroke="#7fae2f" stroke-width="3.400"/><path d="m7.500 8 3-1 5 5v3h-3z" fill="#56902a"/><circle cx="8" cy="8" r="1.800" fill="#f2a33a"/></symbol>
<symbol id="dens" viewBox="0 0 16 16"><path d="M1 3q7 4 14-1M4 1l7 14M13 1Q9 8 3 15M1 9q8-4 13 2" stroke="#66809c" stroke-width="1.100" fill="none"/><circle cx="8" cy="8" r="4.500" fill="none" stroke="#8599ad"/></symbol>
<symbol id="grass" viewBox="0 0 16 16"><path d="m8 .8 6 6.700-6 6.700-6-6.700z" fill="#fff" stroke="#888" stroke-width="1.100" stroke-dasharray="1.200 .5"/><path d="M2 9.500 8 16l6-6.500M1 15.300h14" fill="none" stroke="#777" stroke-width=".9"/><path d="M8 13V5M8 13Q5 10.500 5 7M8 13q3-2.500 3-6M8 13Q6.500 9 6.500 5.500M8 13q1.500-4 1.500-7.500" fill="none" stroke="#43a653" stroke-width=".85"/></symbol>
<symbol id="search" viewBox="0 0 16 16"><circle cx="6.500" cy="6.500" r="5" fill="none" stroke="#8a8a8a" stroke-width="1.200"/><path d="m10 10 4.500 4.500" stroke="#8a8a8a" stroke-width="1.500"/></symbol>
<symbol id="clear" viewBox="0 0 14 12"><path d="M4.500 1H13.500v10H4.500L.5 6z" fill="#8e8e8e"/><path d="m6 3 5 6M11 3 6 9" stroke="#fff" stroke-width="1.100"/></symbol>
<symbol id="mouse" viewBox="0 0 16 16"><path d="M4 6 9 4.500q4 3 4.500 7 0 3.500-3.500 4-4-1-5.500-6z" fill="#eee" stroke="#333"/><path d="m7 13 6-4" stroke="#333"/><path d="M1 2q2-2 4 0l2 3M2 6q0-3 3-3M8 1q2 1 2 4M11 5q0-3 4-4M12 3l3 3" fill="none" stroke="#333" stroke-width="1.200"/><path d="m6 7 4 6M9 6l3 5" stroke="#555"/></symbol>
<symbol id="lock" viewBox="0 0 14 16"><path d="M3.500 8V4.500q0-3.500 3.500-3.500t3.500 3.500V8" fill="none" stroke="#888" stroke-width="1.400"/><rect x="1" y="7" width="12" height="8.500" rx="1.500" fill="#666"/></symbol>
<symbol id="crs" viewBox="0 0 16 16"><circle cx="8" cy="8" r="6.500" fill="#bbb" stroke="#777"/><path d="M0 8h16M2.500 4.500h11M2.500 11.500h11M8 1v14M5 2q-3 6 0 12M11 2q3 6 0 12" fill="none" stroke="#666" stroke-width=".8"/></symbol>
<symbol id="bubble" viewBox="0 0 16 16"><path d="M8 1q7.500 0 7.500 6 0 4-4 5.500L12 15.500 9 13H8Q.5 13 .5 7T8 1z" fill="#5e5e5e"/><path d="M3.500 7h2M7 7h2M10.500 7h2" stroke="#fff" stroke-width="2"/></symbol>
<symbol id="check" viewBox="0 0 12 12"><path d="m3 5.500 2.300 4L9.500 1.500" fill="none" stroke="#000" stroke-width="1.800"/></symbol>
</defs>
</svg>

<div class="app">
<div class="toolbar">
<i class="grip g0"></i>
<b><svg><use href="#new"/></svg></b><b><svg><use href="#open"/></svg></b><b><svg><use href="#save"/></svg></b><b><svg><use href="#layout"/></svg></b><b><svg><use href="#manage"/></svg></b><b><svg><use href="#style"/></svg></b>
<i class="grip"></i>
<b class="on"><svg><use href="#hand"/></svg></b><b><svg><use href="#pansel"/></svg></b><b><svg><use href="#zin"/></svg></b><b><svg><use href="#zout"/></svg></b><b><svg><use href="#zfull"/></svg></b><b class="off"><svg><use href="#zsel"/></svg></b><b><svg><use href="#zlay"/></svg></b><b><svg><use href="#z11"/></svg></b><b><svg><use href="#zprev"/></svg></b><b class="off"><svg><use href="#znext"/></svg></b><b><svg><use href="#newmap"/></svg></b><b><svg><use href="#new3d"/></svg></b><b><svg><use href="#newbm"/></svg></b><b><svg><use href="#bm"/></svg></b><b><svg><use href="#clock"/></svg></b><b><svg><use href="#refresh"/></svg></b>
<i class="grip"></i>
<b><svg><use href="#identify"/></svg></b><b class="off"><svg><use href="#table"/></svg></b><b class="off"><svg><use href="#abacus"/></svg></b><b class="on"><svg><use href="#gear"/></svg></b><b><svg><use href="#sigma"/></svg></b><b><svg><use href="#ruler"/></svg></b><i class="dd"></i><b><svg><use href="#tip"/></svg></b><b class="off"><svg><use href="#action"/></svg></b><i class="dd dim"></i><b><svg><use href="#textann"/></svg></b><i class="dd"></i>
</div>
<div class="toolbar">
<i class="grip g0"></i>
<b><svg><use href="#dsm"/></svg></b><b><svg><use href="#ngpkg"/></svg></b><b><svg><use href="#nshp"/></svg></b><b><svg><use href="#nspl"/></svg></b><b><svg><use href="#nmem"/></svg></b><i class="sep"></i><b><svg><use href="#nvirt"/></svg></b><i class="sep"></i><i class="grip"></i>
<b class="off"><svg><use href="#pencils"/></svg></b><b class="off"><svg><use href="#pencil"/></svg></b><b class="off"><svg><use href="#saveed"/></svg></b><b class="off"><svg><use href="#blob"/></svg></b><b class="off"><svg><use href="#vertex"/></svg></b><i class="dd dim"></i><b class="off"><svg><use href="#medit"/></svg></b><b class="off"><svg><use href="#trash"/></svg></b><b class="off"><svg><use href="#cut"/></svg></b><b class="off"><svg><use href="#copy"/></svg></b><b class="off"><svg><use href="#paste"/></svg></b><b class="off"><svg><use href="#undo"/></svg></b><b class="off"><svg><use href="#redo"/></svg></b>
<i class="grip g1"></i>
<b class="off"><svg><use href="#tag"/></svg></b><b class="off"><svg><use href="#pie"/></svg></b><i class="sep"></i><b><svg><use href="#pin"/></svg></b><b><svg><use href="#rtag"/></svg></b><i class="sep"></i><b class="off"><svg><use href="#tagp"/></svg></b><b class="off"><svg><use href="#tage"/></svg></b><b class="off"><svg><use href="#tagm"/></svg></b><b class="off"><svg><use href="#tagr"/></svg></b><b class="off"><svg><use href="#taged"/></svg></b>
<i class="grip"></i><b><svg><use href="#metas"/></svg></b><i class="grip"></i><b><svg><use href="#pycon"/></svg></b><b><svg><use href="#qfield"/></svg></b><i class="grip"></i><b><svg><use href="#bars"/></svg></b>
</div>
<div class="toolbar"><i class="grip g0"></i><b class="off"><svg><use href="#selrect"/></svg></b></div>

<div class="main">
<section class="browser">
<div class="ptitle">Navegador</div>
<div class="btools"><svg><use href="#add"/></svg><svg><use href="#refresh"/></svg></div>
<div class="btree">
<p><i></i><svg><use href="#fav"/></svg>Favoritos</p>
<p><i class="r"></i><svg><use href="#bm"/></svg>Marcadores</p>
<p><i class="r"></i><svg><use href="#proj"/></svg>Camadas</p>
<p><i class="r"></i><svg><use href="#home"/></svg>Home</p>
<p><i class="r"></i><svg><use href="#folder"/></svg>/</p>
<p><i class="r"></i><svg><use href="#folder"/></svg>/Volumes</p>
<p><i></i><svg><use href="#gpkg"/></svg>GeoPackage</p>
<p><i></i><svg><use href="#feather"/></svg>SpatiaLite</p>
<p><i></i><svg><use href="#eleph"/></svg>PostGIS</p>
<p><i></i><svg><use href="#mssql"/></svg>MSSQL</p>
<p><i></i><svg><use href="#ora"/></svg>Oracle</p>
<p><i></i><svg><use href="#db2"/></svg>DB2</p>
<p><i class="r"></i><svg><use href="#globe"/></svg>WMS/WMTS</p>
<p><i></i><svg><use href="#grid"/></svg>Vector Tiles</p>
<p><i class="d"></i><svg><use href="#tiles"/></svg>XYZ Tiles</p>
<p class="sub"><svg><use href="#tiles"/></svg></p>
<p class="sub"><svg><use href="#tiles"/></svg></p>
<p><i></i><svg><use href="#wcs"/></svg>WCS</p>
<p><i></i><svg><use href="#wfs"/></svg>WFS</p>
<p><i class="r"></i><svg><use href="#wire"/></svg>OWS</p>
<p><i></i><svg><use href="#globe"/></svg>ArcGisMapServer</p>
<p><i></i><svg><use href="#flake"/></svg>GeoNode</p>
<p><i></i><svg><use href="#globe"/></svg>ArcGisFeatureServer</p>
</div>
</section>

<section class="map">
<svg class="raster" viewBox="0 0 600 480" shape-rendering="crispEdges">
<path fill="#dfc27d" d="M192 30V85H186V103H190V112H205V120H213V130L218 140V178H205V184L190 190H178V196L163 205H155L135 218L128 232L108 248L100 262L85 275L78 288H63L66 298L60 305L52 308H68L76 298H90L98 310L112 320L122 340L135 332H142L150 345L160 355H178L190 370L200 376L212 382L218 400H232L242 410V425L226 430V453H240L256 435H264L268 405L275 392L300 378L330 355L345 345L358 325L365 300L380 275L395 262L412 245L428 235L430 205L440 190V178H434V160L430 145L432 125L440 112L455 100L475 82H482L490 70H496L500 58H515V51L533 46V30z"/>
<path fill="#f5f5f5" d="M345 48H370L380 55L388 70V90H414V114H392V104H370V150L362 153L357 160V172L364 182L376 193H388L410 195H421V206L412 210V222L403 235L385 240L382 262L372 267H360V262L348 253L335 240L318 237L302 226L306 210L296 208L300 196L290 188L284 184L275 186L262 176L255 164L244 158V138L262 134L270 125L264 115V94L276 91L286 95L290 108H298L300 98L315 88L325 80L342 65zM384 132H398V144H384zM335 267H342V275H335zM217 135H227V145H217zM270 188H285V205H270z"/>
<path fill="#a6611a" d="M135 218L163 217L174 208L175 198H186L192 206V218H178L174 225L176 240L170 252L157 260L157 267L170 269L178 262L190 267H205L225 270L237 280V306L222 308L216 316V328L224 337L245 340V355L252 363L265 360V343L275 332V313L262 308L250 304V290L260 281L285 273L290 267H300L312 275L335 275L345 290H360L370 285L365 300L358 325L345 345L330 355L300 378L275 392L268 405L264 435H256L240 453H226V430L242 425V410L232 400H218L212 382L200 376L190 370L178 358H160L150 345L142 332H135L122 340L112 320L98 310L90 298H76L68 308H52L60 305L66 298L63 288H78L85 275L100 262L108 248L128 232zM378 275L385 258L400 244L410 235L428 228V236L412 245L395 262L384 277zM399 160L410 155H429L433 167L430 183H418L415 178L399 173zM420 102H432V122H420zM422 122H434V140L428 145L420 135zM424 185H440V197L430 200zM434 177H441V183H434zM453 63L463 60V54H472V60L485 65V72L473 78V83H463V76L453 72zM177 102H189V112H177z"/>
<path fill="#80cdc1" d="M370 218L378 214H405V224L392 229L384 227V232H370zM368 240H377V247H368zM320 105H330V109H336V114H322zM362 54H369V60H362z"/>
<path fill="#018571" d="M390 216H402V224H396V220H390z"/>
</svg>
</section>

<section class="right">
<div class="ptitle">Camadas<span><svg><use href="#float"/></svg><svg><use href="#close"/></svg></span></div>
<div class="rtools"><svg><use href="#sbrush"/></svg><svg><use href="#addgrp"/></svg><svg><use href="#eye"/></svg><svg><use href="#filter"/></svg><svg class="fade"><use href="#eps"/></svg><i class="dd dim"></i><svg><use href="#expand"/></svg><svg><use href="#collapse"/></svg><svg><use href="#rem"/></svg></div>
<div class="ltree">
<p class="sel"><i class="d"></i><u class="cb"><svg><use href="#check"/></svg></u><svg class="ic"><use href="#raster"/></svg><span class="lay act">Recortado (mascara)</span><svg class="mem"><use href="#chip"/></svg></p>
<p class="leg"><em class="c1"></em>&lt;= 360,0</p>
<p class="leg"><em class="c2"></em>360,0 - 712,9</p>
<p class="leg"><em class="c3"></em>712,9 - 1065,7</p>
<p class="leg"><em class="c4"></em>1065,7 - 1418,6</p>
<p class="leg"><em class="c5"></em>&gt; 1418,6</p>
<p><i class="d"></i><u class="cb"></u><svg class="ic"><use href="#raster2"/></svg><span class="lay">Interpolado</span><svg class="mem"><use href="#chip"/></svg></p>
<p class="leg"><em class="c6"></em>7.20921</p>
<p class="leg"><em></em>1771.4</p>
<p><i></i><u class="cb"></u><span class="dot"></span><span class="lay">CatalogoEstaçõesAutomáticas</span></p>
</div>
<div class="hscroll"><span><i class="l"></i></span><strong></strong><span><i class="r"></i></span></div>
<div class="handle"><i></i></div>
<div class="ptitle t2">Caixa de Ferramentas de processamento<span><svg><use href="#float"/></svg><svg><use href="#close"/></svg></span></div>
<div class="rtools r2"><svg><use href="#gears"/></svg><svg><use href="#pydd"/></svg><svg><use href="#gclock"/></svg><svg><use href="#page"/></svg><i class="sep"></i><svg class="fade"><use href="#edit"/></svg><i class="sep"></i><svg><use href="#wrench2"/></svg></div>
<div class="rsearch"><svg><use href="#search"/></svg><span>INTERPOLAÇ</span><svg class="clr"><use href="#clear"/></svg></div>
<div class="ptree">
<p><i class="d"></i><svg><use href="#gclock"/></svg>Usado recentemente</p>
<p class="l2"><svg><use href="#interp"/></svg>Interpolação TIN</p>
<p class="l2"><svg><use href="#interp"/></svg>Interpolação IDW</p>
<p><i class="d"></i><svg><use href="#qgis"/></svg>Interpolar</p>
<p class="l2"><svg><use href="#dens"/></svg>Densidade da linha</p>
<p class="l2"><svg><use href="#interp"/></svg>Interpolação IDW</p>
<p class="l2 sel"><svg class="tint"><use href="#interp"/></svg>Interpolação TIN</p>
<p><i class="d"></i><svg><use href="#grass"/></svg>GRASS</p>
<p class="grp"><i class="d"></i>Raster (r.*)</p>
<p class="l3"><svg><use href="#grass"/></svg>r.fillnulls</p>
<p class="l3"><svg><use href="#grass"/></svg>r.resamp.bspline</p>
<p class="l3"><svg><use href="#grass"/></svg>r.resamp.interp</p>
<p class="l3"><svg><use href="#grass"/></svg>r.surf.idw</p>
<p class="grp"><i class="d"></i>Vetor (v.*)</p>
<p class="l3"><svg><use href="#grass"/></svg>v.surf.bspline</p>
<p class="l3"><svg><use href="#grass"/></svg>v.surf.idw</p>
<p class="l3"><svg><use href="#grass"/></svg>v.surf.rst</p>
<p class="l3"><svg><use href="#grass"/></svg>v.surf.rst.cvdev</p>
</div>
</section>
</div>

<footer class="status">
<div class="locate"><svg><use href="#search"/></svg>Escrever para localizar (⌘K)</div>
<span class="msg">1 legend entries removed.</span>
<span class="coordl">Coordenada</span><div class="box coord">-24.99,0.01</div><svg class="s16"><use href="#mouse"/></svg>
<span class="escl">Escala</span><div class="box esc">1:18097292<i class="ddb"></i></div><svg class="lock"><use href="#lock"/></svg>
<span class="lupal">Lupa</span><div class="box lupa">100%<i class="spin"></i></div>
<span class="rotl">Rotação</span><div class="box rot">0,0 °<i class="spin"></i></div>
<u class="cb"><svg><use href="#check"/></svg></u><span class="rendl">Renderizar</span>
<svg class="s16 crs"><use href="#crs"/></svg><span class="epsg">EPSG:4674</span><svg class="s16 bub"><use href="#bubble"/></svg>
</footer>
</div>

<div class="dialog">
<header class="dtitle"><i class="tl red"></i><i class="tl gray"></i><i class="tl green"></i><span>Propriedades da camada — Recortado (mascara) — Simbologia</span></header>
<div class="dbody">
<nav class="side">
<div class="sfind"><svg><use href="#search"/></svg></div>
<a><svg><use href="#info"/></svg></a><a><svg><use href="#sgear"/></svg></a><a class="cur"><svg><use href="#symb"/></svg></a><a><svg><use href="#transp"/></svg></a><a><svg><use href="#histo"/></svg></a><a><svg><use href="#brush"/></svg></a><a><svg><use href="#clock"/></svg></a><a><svg><use href="#pyr"/></svg></a><a><svg><use href="#meta"/></svg></a><a><svg><use href="#legend"/></svg></a><a><svg><use href="#serv"/></svg></a>
</nav>
<div class="content">
<h2><i class="bigd"></i>Renderização da banda</h2>
<div class="scrollwrap">
<div class="group">
<div class="row tipo"><label>Tipo de renderização</label><div class="combo">Banda simples falsa-cor</div></div>
<div class="row banda"><label>Banda</label><div class="combo">Banda 1 (Gray)</div></div>
<div class="row minmax"><label>Mín</label><div class="inp">7,2092104</div><label class="mx">Máx</label><div class="inp">1771,4038086</div></div>
<h3><i class="bigr"></i>Configurações de Valor Min / Max</h3>
<div class="row interp"><label>Interpolar</label><div class="combo">Método Discreto</div></div>
<div class="row ramp"><label>Gradiente de cores</label><div class="rampbtn"><div></div></div><div class="rampdd"></div></div>
<div class="row suf"><label>Sufixo da unidade rotulada</label><div class="inp"></div></div>
<div class="row prec"><label>Label precision</label><div class="inp">1<svg><use href="#clear"/></svg><i class="spin"></i></div></div>
<div class="table">
<div class="th"><span>Valor &lt;=</span><span>Cor</span><span>Rótulo</span></div>
<div class="tr"><span>360,04813</span><em class="c1"></em><span>&lt;= 360,0</span></div>
<div class="tr"><span>712,8870...</span><em class="c2"></em><span>360,0 - 712,9</span></div>
<div class="tr"><span>1065,725...</span><em class="c3"></em><span>712,9 - 1065,7</span></div>
<div class="tr"><span>1418,564...</span><em class="c4"></em><span>1065,7 - 1418,6</span></div>
<div class="tr"><span>inf</span><em class="c5"></em><span>&gt; 1418,6</span></div>
</div>
</div>
<div class="vscroll"><div class="thumb"></div><div class="track"></div><div class="vend"></div></div>
</div>
<div class="btns"><button>Help</button><button class="est">Estilo</button><button class="app-b">Apply</button><i class="grow"></i><button>Cancel</button><button>OK</button></div>
</div>
</div>
</div>
<div class="badge">10</div>
</body>
</html>
```
FILE: styles.css
```css
* { box-sizing: border-box; }
body { margin: 0; width: 1440px; height: 900px; overflow: hidden; position: relative; background: #ececec; font: 13px/18px Inter, "Noto Sans", sans-serif; color: #000; }
p, h2, h3 { margin: 0; }
i, em { font-style: normal; display: block; flex: none; }
u { text-decoration: none; }
svg { flex: none; display: block; }
.defs { position: absolute; width: 0; height: 0; }
.app { width: 1440px; height: 900px; display: flex; flex-direction: column; }

.toolbar { height: 39px; flex: none; display: flex; align-items: center; background: linear-gradient(#f6f6f6, #ebebeb); border-bottom: 1px solid #b1b1b1; box-shadow: inset 0 1px #fafafa; }
.toolbar b { width: 33px; height: 31px; flex: none; display: flex; align-items: center; justify-content: center; }
.toolbar b svg { width: 24px; height: 24px; }
.toolbar b.on { width: 31px; margin: 0 1px; background: #d9d9d9; border: 1px solid #a9a9a9; border-radius: 3px; }
.off svg, .fade { opacity: .36; filter: grayscale(.6); }
.grip { width: 16px; height: 18px; background: repeating-linear-gradient(transparent 0 1px, #f1f1f1 1px 3px), repeating-linear-gradient(90deg, #b0b0b0 0 1px, transparent 1px 3px); background-origin: content-box; background-clip: content-box; padding-left: 8.5px; padding-right: 3.5px; }
.grip.g0 { width: 12.5px; padding-left: 5px; padding-right: 3.5px; }
.grip.g1 { width: 15px; padding-right: 2.5px; }
.sep { width: 7px; height: 20px; border-left: 1px solid #c6c6c6; margin-left: 4px; margin-right: -4px; }
.dd { width: 12px; height: 5px; display: flex; justify-content: center; margin-left: -1px; }
.dd + b { margin-left: 1px; }
.dd::before { content: ""; border: 4px solid transparent; border-top: 5px solid #5a5a5a; border-bottom: 0; }
.dd.dim::before { border-top-color: #a2a2a2; }

.main { flex: 1; min-height: 0; display: flex; gap: 6px; }
.ptitle { height: 20px; font-size: 11px; line-height: 20px; letter-spacing: .03px; padding-left: 4px; display: flex; justify-content: space-between; flex: none; }
.ptitle span { display: flex; gap: 2px; align-items: center; padding-right: 2px; }
.ptitle svg { width: 12px; height: 12px; }
.browser { width: 318px; display: flex; flex-direction: column; }
.btools { height: 30px; display: flex; align-items: center; padding: 0 0 2px 8px; gap: 9px; flex: none; }
.btools svg { width: 16px; height: 16px; }
.btree { flex: 1; background: #fff; border: 1px solid #b4b4b4; overflow: hidden; }
.btree p { height: 18px; display: flex; align-items: center; padding-left: 7px; white-space: nowrap; }
.btree svg { width: 16px; height: 16px; margin-right: 6px; }
.btree p > i { width: 6px; margin-right: 10px; display: flex; }
.btree p.sub { padding-left: 43px; }
i.r::before { content: ""; display: block; border: 4px solid transparent; border-left: 5px solid #5f5f5f; border-right: 0; }
i.l::before { content: ""; display: block; border: 4px solid transparent; border-right: 5px solid #5f5f5f; border-left: 0; }
i.d::before { content: ""; border: 4px solid transparent; border-top: 5px solid #5f5f5f; border-bottom: 0; }

.map { width: 856px; background: #fff; border: 1px solid #b4b4b4; position: relative; overflow: hidden; }
.map .raster { position: absolute; left: 365px; top: 462px; width: 200px; height: 160px; }

.right { width: 254px; display: flex; flex-direction: column; }
.rtools { height: 30px; flex: none; display: flex; align-items: center; padding: 0 0 2px 7px; gap: 9px; }
.rtools svg { width: 17px; height: 17px; margin-right: -.9px; }
.rtools .dd { margin: 0 -6px 0 -7px; width: 17px; }
.ltree { height: 273px; flex: none; background: #fff; border: 1px solid #b4b4b4; border-bottom: 0; overflow: hidden; }
.right p { height: 18px; display: flex; align-items: center; white-space: nowrap; padding-left: 6px; }
.right p > i { width: 8px; margin-right: 9px; display: flex; }
.right p > svg { width: 16px; height: 16px; margin-right: 6px; }
.sel { background: #b1d6ff; }
.tint { opacity: .75; }
.cb { width: 14px; height: 14px; background: #fff; border: 1px solid #b8b8b8; flex: none; display: block; }
.cb svg { width: 12px; height: 12px; }
.ltree .cb { margin-right: 6px; }
.lay { font-weight: 700; font-style: italic; color: #808080; letter-spacing: .13px; }
.lay.act { font-style: normal; color: #000; text-decoration: underline; }
.right p > .mem { margin-left: auto; margin-right: 5px; }
.leg.leg { padding-left: 43px; letter-spacing: .07px; }
.leg em { width: 16px; height: 16px; margin-right: 6px; }
.c1 { background: #a6611a; } .c2 { background: #dfc27d; } .c3 { background: #f5f5f5; } .c4 { background: #80cdc1; } .c5 { background: #018571; } .c6 { background: #000; }
.dot { width: 6px; height: 6px; border-radius: 3px; background: #a04042; margin: 0 11px 0 5px; flex: none; }
.hscroll { height: 14px; flex: none; display: flex; border: 1px solid #b4b4b4; background: #e4e4e4; }
.hscroll span { width: 13px; display: flex; align-items: center; justify-content: center; background: #f5f5f5; }
.hscroll span:last-child { border-left: 1px solid #b4b4b4; }
.hscroll strong { flex: 1; margin-right: 12px; background: linear-gradient(#fff, #f2f2f2); border: solid #b4b4b4; border-width: 0 1px; }
.handle { height: 6px; flex: none; display: flex; justify-content: center; padding-top: 2px; }
.handle i { width: 16px; height: 1px; background: repeating-linear-gradient(90deg, #aaa 0 1px, transparent 1px 3px); }
.rtools .sep { margin: 0 -5px 0 0; width: 4px; height: 12px; }
.rsearch { height: 24px; flex: none; border: 1px solid #b1b1b1; border-top-color: #979797; border-radius: 2px; background: #fff; display: flex; align-items: center; padding-left: 7px; letter-spacing: -.1px; }
.rsearch svg { width: 14px; height: 14px; margin-right: 7px; }
.rsearch .clr { margin-left: auto; width: 14px; height: 12px; }
.ptree { flex: 1; min-height: 0; border: 1px solid #b4b4b4; background: #fff; overflow: hidden; letter-spacing: -.1px; }
.right .l2 { padding-left: 43px; }
.right .l3 { padding-left: 63px; }
.right .grp { padding-left: 26px; height: 16px; letter-spacing: -.15px; }
.right .grp > i { margin-right: 9px; }

.status { height: 30px; flex: none; display: flex; align-items: center; font-size: 11px; white-space: nowrap; }
.locate { width: 306px; height: 24px; margin-left: 4px; border: 1px solid #b1b1b1; border-radius: 3px; background: #fff; display: flex; align-items: center; color: #777; font-size: 13px; padding-left: 7px; letter-spacing: -.15px; }
.locate svg { width: 14px; height: 14px; margin-right: 7px; }
.status span { flex: none; }
.msg { width: 291px; padding-left: 8px; letter-spacing: .04px; }
.coordl { width: 75px; padding-left: 8px; }
.box { height: 22px; border: 1px solid #ababab; border-radius: 3px; background: #fff; line-height: 20px; padding-left: 5px; position: relative; flex: none; display: flex; justify-content: space-between; }
.coord { width: 74px; letter-spacing: .07px; }
.s16 { width: 16px; height: 16px; margin-left: 4px; }
.escl { width: 50px; padding-left: 13px; }
.esc { width: 93px; padding-left: 4px; letter-spacing: .07px; }
.ddb { width: 20px; height: 20px; border-left: 1px solid #bbb; background: linear-gradient(#fff, #f0f0f0); display: flex; justify-content: center; align-items: center; }
.ddb::before { content: ""; border: 4px solid transparent; border-top: 5px solid #5a5a5a; border-bottom: 0; }
.lock { width: 14px; height: 16px; margin-left: 12px; }
.lupal { width: 37px; padding-left: 8px; }
.lupa { width: 90px; }
.spin { width: 14px; height: 100%; border-left: 1px solid #ababab; display: flex; flex-direction: column; justify-content: center; align-items: center; gap: 5px; background: #fdfdfd; }
.spin::before, .spin::after { content: ""; border: 4px solid transparent; }
.spin::before { border-bottom: 4px solid #5a5a5a; border-top: 0; }
.spin::after { border-top: 4px solid #5a5a5a; border-bottom: 0; }
.rotl { width: 61px; padding-left: 9px; }
.rot { width: 92px; margin-right: 6px; }
.rendl { width: 72px; padding-left: 5px; }
.crs { margin-left: 5px; }
.epsg { width: 80px; padding-left: 2px; letter-spacing: .05px; }

.dialog { position: absolute; left: 48px; top: 69px; width: 1132px; height: 526px; border-radius: 5px 5px 4px 4px; overflow: hidden; box-shadow: 0 22px 44px rgba(0,0,0,.52), 0 0 1px 1px rgba(0,0,0,.28); background: #ececec; display: flex; flex-direction: column; letter-spacing: -.12px; }
.dtitle { height: 22px; flex: none; background: linear-gradient(#ebe9eb, #d2d0d2); border-bottom: 1px solid #b0aeb0; display: flex; align-items: center; position: relative; padding-left: 8px; gap: 8px; }
.tl { width: 12px; height: 12px; border-radius: 6px; }
.red { background: #ff4646; border: 1px solid #e23a3a; } .gray { background: #d0ced0; border: 1px solid #bcbabc; } .green { background: #08ce45; border: 1px solid #0cb83c; }
.dtitle span { flex: 1; text-align: center; padding-right: 69px; color: #333; }
.dbody { flex: 1; min-height: 0; display: flex; }
.side { width: 37px; background: #5c5c5c; display: flex; flex-direction: column; }
.sfind { height: 23px; background: #fff; border: 1px solid #c4c4c4; margin-bottom: 7px; display: flex; align-items: center; justify-content: center; padding-right: 7px; }
.sfind svg { width: 14px; height: 14px; }
.side a { height: 36px; display: flex; align-items: center; justify-content: center; padding: 0 3px 1px 0; }
.side a svg { width: 25px; height: 25px; }
.side a.cur { background: #ececec; }
.content { flex: 1; display: flex; flex-direction: column; min-width: 0; padding-left: 5px; }
h2 { height: 22px; line-height: 22px; font-size: 13px; display: flex; align-items: center; flex: none; letter-spacing: 0; }
.bigd { border: 6px solid transparent; border-top: 8px solid #383838; border-bottom: 0; margin: 0 8px 0 1px; }
.bigr { border: 6px solid transparent; border-left: 8px solid #383838; border-right: 0; margin: 0 10px 0 1px; }
.scrollwrap { height: 449px; flex: none; display: flex; overflow: hidden; margin-right: 3px; }
.group { flex: 1; border: solid #d2d2d2; border-width: 1px 1px 0 1px; background: #e8e8e8; padding: 10px 0 0 10px; overflow: hidden; }
.row { display: flex; align-items: center; white-space: nowrap; }
.combo, .inp { border: 1px solid #adadad; border-radius: 3px; height: 24px; padding-left: 4px; line-height: 22px; }
.combo { background: linear-gradient(#fff, #efefef); display: flex; justify-content: space-between; align-items: center; padding-right: 7px; }
.combo::after, .rampdd::before { content: ""; border: 4px solid transparent; border-top: 5px solid #5a5a5a; border-bottom: 0; }
.inp { background: #fff; border-top-color: #989898; display: flex; letter-spacing: -.05px; }
.tipo label { width: 134px; letter-spacing: -.17px; }
.tipo .combo { width: 188px; }
.banda { margin-top: 9px; padding-left: 3px; }
.banda label { width: 263px; }
.banda .combo { width: 781px; padding-right: 6px; letter-spacing: 0; }
.minmax { margin-top: 6px; padding-left: 3px; }
.minmax label { width: 263px; }
.minmax .inp { width: 256px; padding-left: 3px; }
.minmax .inp:last-child { padding-left: 2px; }
.minmax .inp:nth-child(2) { padding-left: 4px; }
.minmax .mx { padding-left: 6px; width: 269px; }
h3 { font-size: 13px; height: 18px; margin: 6px 0 13px 6px; display: flex; align-items: center; letter-spacing: 0; }
.interp, .ramp, .suf, .prec { padding-left: 6px; }
.interp label, .ramp label, .suf label, .prec label { width: 350px; }
.interp .combo, .suf .inp, .prec .inp { width: 688px; }
.ramp { margin: 6px 0; }
.rampbtn { width: 676px; height: 28px; border: 1px solid #adadad; border-radius: 3px; background: linear-gradient(#fff, #efefef); padding: 5px 4px; }
.rampbtn div { height: 16px; background: linear-gradient(90deg, #a6611a, #dfc27d 25%, #f5f5f5 50%, #80cdc1 75%, #018571); }
.rampdd { width: 12px; height: 28px; border: 1px solid #adadad; border-radius: 3px; background: linear-gradient(#fff, #efefef); display: flex; align-items: center; justify-content: center; }
.prec { margin-top: 7px; }
.prec .inp { height: 23px; }
.prec svg { width: 14px; height: 12px; margin: 4px 11px 0 auto; }
.prec .spin { width: 15px; }
.table { margin: 7px 0 0 6px; width: 1038px; height: 230px; border: 1px solid #adadad; background: #fff; }
.th { height: 17px; line-height: 17px; background: linear-gradient(#fff, #ebebeb); border-bottom: 1px solid #adadad; display: flex; }
.th span { padding-left: 2px; border-right: 1px solid #c2c2c2; width: 100px; }
.th span:nth-child(2) { width: 59px; } .th span:nth-child(3) { border: 0; }
.tr { height: 38px; display: flex; align-items: center; letter-spacing: 0; }
.tr span { width: 111px; padding-left: 23px; }
.tr span:last-child { padding-left: 15px; color: #9a9a9a; width: 200px; letter-spacing: .1px; }
.tr em { width: 36px; height: 36px; border-radius: 5px; }
.vscroll { width: 14px; display: flex; flex-direction: column; border-left: 1px solid #c5c5c5; background: #e3e3e3; }
.thumb { height: 221px; background: linear-gradient(90deg, #fff, #f2f2f2); border-bottom: 1px solid #b8b8b8; }
.track { flex: 1; }
.vend { height: 14px; background: #fafafa; border-top: 1px solid #c0c0c0; display: flex; align-items: center; justify-content: center; }
.vend::before { content: ""; border: 4px solid transparent; border-top: 5px solid #5a5a5a; border-bottom: 0; }
.btns { flex: 1; display: flex; gap: 6px; padding: 6px 3px 0 0; margin-left: -1px; }
button { width: 80px; height: 24px; border: 1px solid #adadad; border-radius: 3px; background: linear-gradient(#fff, #f0f0f0); font: 13px Inter, "Noto Sans", sans-serif; color: #000; padding: 0; position: relative; }
.est { padding-right: 13px; }
.est::after { content: ""; position: absolute; right: 4px; top: 10px; border: 3px solid transparent; border-top: 4px solid #5a5a5a; border-bottom: 0; }
.app-b { border-color: #6f9fce; background: linear-gradient(#f8fbff, #e4eef9); }
.grow { flex: 1; }
.badge { position: absolute; left: 1128px; top: 37px; width: 81px; height: 78px; border-radius: 50%; background: #f00; font: 43px/74px "Liberation Sans", Arial, sans-serif; text-align: center; }
```
